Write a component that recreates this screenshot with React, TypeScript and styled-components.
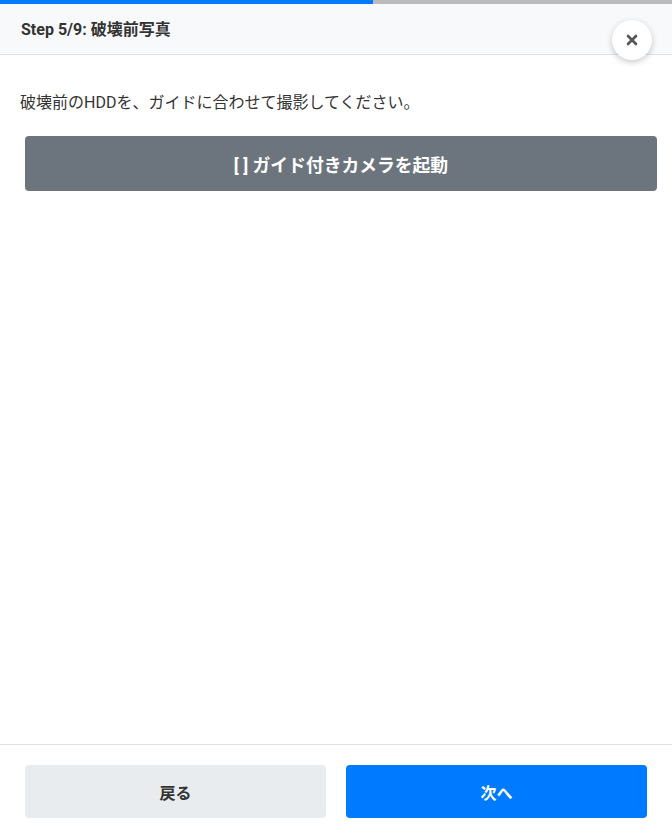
import React from "react";
import styled, { createGlobalStyle } from "styled-components";

const Global = createGlobalStyle`
  html, body { margin: 0; padding: 0; height: 100%; background: #fff; }
  body { font-family: Roboto, "Noto Sans CJK JP", "Noto Sans", sans-serif; color: #212529; }
  #root { height: 100%; }
  * { box-sizing: border-box; }
`;

const Page = styled.div`
  position: relative;
  display: flex;
  flex-direction: column;
  height: 100vh;
`;

const Progress = styled.div`
  height: 4px;
  background: #bbbbbb;
  flex: none;
`;

const ProgressFill = styled.div`
  height: 100%;
  background: #007bff;
`;

const Header = styled.header`
  flex: none;
  height: 51px;
  display: flex;
  align-items: center;
  padding: 0 21px;
  background: #f8f9fa;
  border-bottom: 1px solid #dee2e6;
`;

const Title = styled.h1`
  margin: 0;
  font-size: 16px;
  font-weight: 700;
  color: #333;
  line-height: 1;
  padding-top: 1px;
`;

const CloseButton = styled.button`
  position: absolute;
  top: 20px;
  right: 20px;
  width: 40px;
  height: 40px;
  border-radius: 50%;
  border: none;
  background: #fff;
  box-shadow: 0 2px 6px rgba(0, 0, 0, 0.22);
  display: flex;
  align-items: center;
  justify-content: center;
  padding: 0;
  cursor: pointer;
`;

const Body = styled.main`
  flex: 1;
  padding: 36px 15px 0 20px;
`;

const Instruction = styled.p`
  margin: 0 0 21px;
  font-size: 16px;
  line-height: 24px;
  color: #333;
`;

const CameraButton = styled.button`
  display: flex;
  align-items: center;
  justify-content: center;
  width: calc(100% - 5px);
  margin-left: 5px;
  height: 55px;
  border: none;
  border-radius: 4px;
  background: #6c757d;
  color: #fff;
  font-family: inherit;
  font-size: 17.8px;
  font-weight: 700;
  cursor: pointer;
`;

const Footer = styled.footer`
  flex: none;
  height: 95px;
  border-top: 1px solid #dee2e6;
  display: grid;
  grid-template-columns: 1fr 1fr;
  column-gap: 20px;
  padding: 20px 25px 0;
  align-items: start;
`;

const NavButton = styled.button<{ $primary?: boolean }>`
  height: 53px;
  border: none;
  border-radius: 4px;
  font-family: inherit;
  font-size: 16px;
  font-weight: 700;
  background: ${(p) => (p.$primary ? "#007bff" : "#e9ecef")};
  color: ${(p) => (p.$primary ? "#fff" : "#333")};
  cursor: pointer;
`;

export default function App() {
  const step = 5;
  const total = 9;
  return (
    <>
      <Global />
      <Page>
        <Progress>
          <ProgressFill style={{ width: `${(step / total) * 100}%` }} />
        </Progress>
        <Header>
          <Title>Step 5/9: 破壊前写真</Title>
        </Header>
        <CloseButton aria-label="close">
          <svg width="12" height="12" viewBox="0 0 12 12">
            <path d="M2 2 L10 10 M10 2 L2 10" stroke="#555" strokeWidth="2.6" strokeLinecap="round" />
          </svg>
        </CloseButton>
        <Body>
          <Instruction>破壊前のHDDを、ガイドに合わせて撮影してください。</Instruction>
          <CameraButton>[ ] ガイド付きカメラを起動</CameraButton>
        </Body>
        <Footer>
          <NavButton>戻る</NavButton>
          <NavButton $primary>次へ</NavButton>
        </Footer>
      </Page>
    </>
  );
}
